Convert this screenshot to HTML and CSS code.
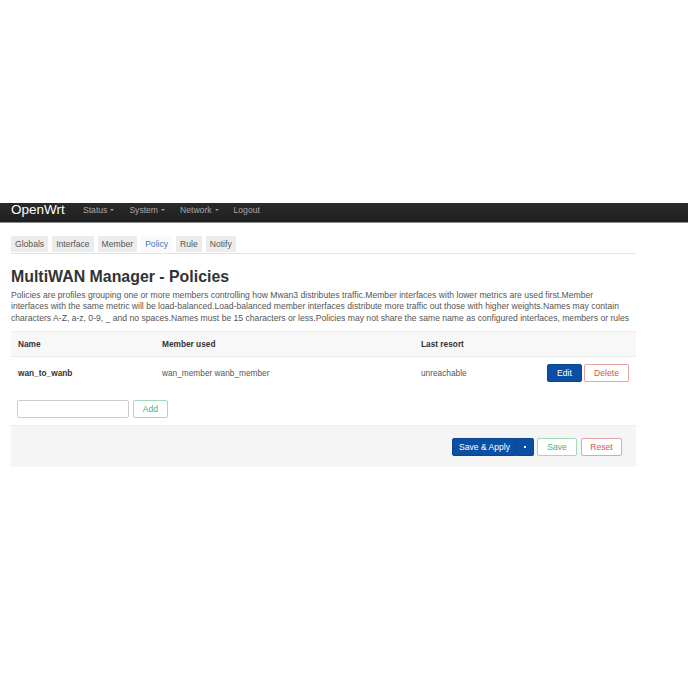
FILE: index.html
```html
<!DOCTYPE html>
<html>
<head>
<meta charset="utf-8">
<link rel="stylesheet" href="styles.css">
</head>
<body>
<div class="page">
  <header class="navbar">
    <span class="brand">OpenWrt</span>
    <nav class="menu">
      <span class="item">Status <span class="caret"></span></span>
      <span class="item">System <span class="caret"></span></span>
      <span class="item">Network <span class="caret"></span></span>
      <span class="item">Logout</span>
    </nav>
  </header>
  <main class="content">
    <ul class="tabs">
      <li class="tab">Globals</li>
      <li class="tab">Interface</li>
      <li class="tab">Member</li>
      <li class="tab active">Policy</li>
      <li class="tab">Rule</li>
      <li class="tab">Notify</li>
    </ul>
    <h2 class="title">MultiWAN Manager - Policies</h2>
    <p class="desc">Policies are profiles grouping one or more members controlling how Mwan3 distributes traffic.Member interfaces with lower metrics are used first.Member interfaces with the same metric will be load-balanced.Load-balanced member interfaces distribute more traffic out those with higher weights.Names may contain characters A-Z, a-z, 0-9, _ and no spaces.Names must be 15 characters or less.Policies may not share the same name as configured interfaces, members or rules</p>
    <div class="table">
      <div class="row head">
        <div class="c-name">Name</div>
        <div class="c-member">Member used</div>
        <div class="c-last">Last resort</div>
        <div class="c-act"></div>
      </div>
      <div class="row body">
        <div class="c-name strong">wan_to_wanb</div>
        <div class="c-member">wan_member wanb_member</div>
        <div class="c-last">unreachable</div>
        <div class="c-act">
          <span class="btn primary">Edit</span>
          <span class="btn danger">Delete</span>
        </div>
      </div>
    </div>
    <div class="add-row">
      <span class="input"></span>
      <span class="btn positive">Add</span>
    </div>
    <div class="actions">
      <span class="split">
        <span class="btn primary apply">Save &amp; Apply</span>
        <span class="btn primary drop"><span class="dot"></span></span>
      </span>
      <span class="btn positive">Save</span>
      <span class="btn danger">Reset</span>
    </div>
  </main>
</div>
</body>
</html>
```
FILE: styles.css
```css
html, body {
  margin: 0;
  padding: 0;
  background: #fff;
}
body {
  font-family: "Liberation Sans", Arial, sans-serif;
  color: #404040;
}
.page {
  padding-top: 203px;
}
.navbar {
  height: 19px;
  background: linear-gradient(#2a2a2a, #1f1f1f);
  border-bottom: 1px solid #8a8a8a;
  display: flex;
  align-items: flex-start;
  padding-left: 11px;
}
.brand {
  color: #fff;
  font-size: 13.5px;
  line-height: 13px;
  width: 72px;
}
.menu {
  display: flex;
  gap: 15px;
  font-size: 8.6px;
  line-height: 10px;
  padding-top: 2px;
  color: #a8a8a8;
}
.item {
  display: flex;
  align-items: center;
  gap: 3px;
}
.caret {
  display: inline-block;
  width: 0;
  height: 0;
  border-left: 2.5px solid transparent;
  border-right: 2.5px solid transparent;
  border-top: 2.5px solid #a0a0a0;
}
.content {
  width: 625px;
  margin-left: 11px;
}
.tabs {
  list-style: none;
  margin: 13px 0 0 0;
  padding: 0;
  display: flex;
  gap: 4px;
  border-bottom: 1px solid #e4e4e4;
  height: 17px;
}
.tab {
  background: #ececec;
  color: #555;
  font-size: 8.6px;
  padding: 0 4px;
  line-height: 17px;
  height: 16px;
}
.tab.active {
  background: #fafafa;
  color: #3f7ab5;
}
.title {
  margin: 13px 0 0 0;
  font-size: 15.9px;
  line-height: 20px;
  color: #333;
  font-weight: bold;
}
.desc {
  margin: 3px 0 0 0;
  max-width: 621px;
  font-size: 8.6px;
  line-height: 11.4px;
  color: #555;
}
.table {
  margin-top: 7px;
  border-top: 1px solid #eee;
}
.row {
  display: flex;
  align-items: center;
  font-size: 8.3px;
  color: #555;
}
.row.head {
  background: #f8f8f8;
  height: 24px;
  font-weight: bold;
  color: #333;
  border-bottom: 1px solid #eaeaea;
}
.row.body {
  height: 31px;
}
.c-name {
  width: 144px;
  padding-left: 7px;
}
.c-member {
  width: 259px;
}
.c-last {
  width: 126px;
}
.c-act {
  flex: 1;
  display: flex;
  gap: 2px;
}
.strong {
  font-weight: bold;
  color: #333;
}
.btn {
  display: inline-flex;
  align-items: center;
  justify-content: center;
  box-sizing: border-box;
  height: 18px;
  font-size: 8.6px;
  border-radius: 2px;
  padding: 0 8px;
  border: 1px solid transparent;
}
.btn.primary {
  background: #0a4fa3;
  color: #fff;
  border-color: #0a4594;
}
.btn.danger {
  background: #fff;
  color: #d9534f;
  border-color: #e6a3a1;
}
.btn.positive {
  background: #fff;
  color: #4fae7a;
  border-color: #a6d8bb;
}
.add-row {
  display: flex;
  gap: 4px;
  margin-top: 12px;
  margin-left: 6px;
  align-items: center;
}
.input {
  display: block;
  width: 112px;
  height: 18px;
  box-sizing: border-box;
  border: 1px solid #ccc;
  border-radius: 2px;
}
.add-row .btn {
  width: 35px;
  padding: 0;
}
.actions {
  margin-top: 7px;
  background: #f5f5f5;
  height: 41px;
  display: flex;
  align-items: center;
  justify-content: flex-end;
  gap: 3px;
  padding-right: 14px;
  border-top: 1px solid #eee;
}
.split {
  display: flex;
}
.apply {
  width: 65px;
  padding: 0;
  border-radius: 2px 0 0 2px;
  border-right: 1px solid #4a7cc0;
}
.drop {
  width: 17px;
  padding: 0;
  border-radius: 0 2px 2px 0;
  border-left: none;
}
.dot {
  width: 2px;
  height: 2px;
  background: #fff;
  display: block;
}
.actions .btn.positive {
  width: 40px;
  padding: 0;
}
.actions .btn.danger {
  width: 41px;
  padding: 0;
  margin-left: 1px;
}
.c-act .btn.primary {
  width: 35px;
  padding: 0;
}
.c-act .btn.danger {
  width: 45px;
  padding: 0;
}
```
